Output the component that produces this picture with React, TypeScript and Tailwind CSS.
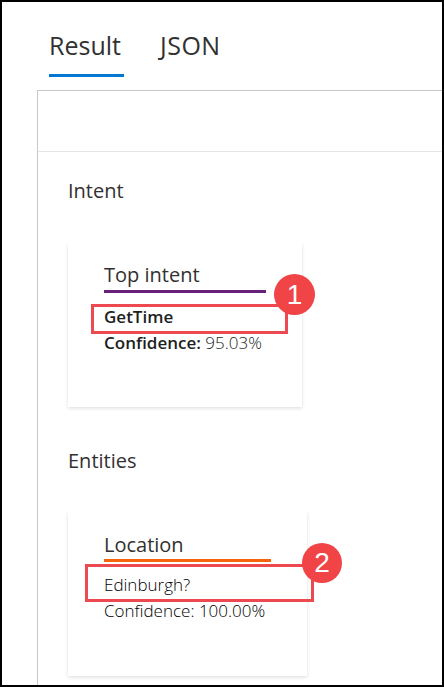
import React from "react";

function Badge({ n, className }: { n: string; className: string }) {
  return (
    <div
      className={`absolute flex items-center justify-center rounded-full bg-[#f04446] text-white font-['Liberation_Sans',sans-serif] text-[28px] leading-none ${className}`}
    >
      {n}
    </div>
  );
}

export default function App() {
  return (
    <div className="flex h-[687px] w-[444px] flex-col overflow-hidden border-2 border-black bg-white font-['Open_Sans',sans-serif] text-[#323130]">
      {/* Tabs */}
      <div className="flex pl-[47px] pt-[31px]">
        <div className="flex w-[75px] flex-col">
          <span className="text-[25px] leading-[25px]">Result</span>
          <div className="mt-[16px] h-[3px] bg-[#0078d4]" />
        </div>
        <div className="ml-[36px]">
          <span className="text-[25px] leading-[25px] tracking-[0.5px]">JSON</span>
        </div>
      </div>

      {/* Panel */}
      <div className="ml-[35px] mt-[13px] flex-1 border-l border-t border-[#c8c8c8]">
        <div className="h-[61px] border-b border-[#e5e5e5]" />
        <div className="pl-[30px]">
          <div className="mt-[29px] text-[20px] leading-[20px]">Intent</div>

          <div className="mt-[41px] h-[165px] w-[234px] bg-white px-[36px] pt-[21px] shadow-[0_1.6px_3.6px_rgba(0,0,0,0.13),0_0.3px_0.9px_rgba(0,0,0,0.11)]">
            <div className="text-[20px] leading-[24px]">Top intent</div>
            <div className="mt-[3px] h-[3px] bg-[#68217a]" />
            <div className="relative mt-[11px]">
              <div className="text-[17px] font-semibold leading-[26px] text-[#201f1e]">GetTime</div>
              <div className="absolute -left-[13px] -right-[22px] top-0 -bottom-[4px] border-[3px] border-[#ec4a50]" />
              <Badge n="1" className="left-[170px] -top-[30px] h-[41px] w-[41px]" />
            </div>
            <div className="text-[17px] leading-[26px] text-[#201f1e]">
              <span className="font-semibold">Confidence:</span> <span className="font-light">95.03%</span>
            </div>
          </div>

          <div className="mt-[44px] text-[20px] leading-[20px]">Entities</div>

          <div className="mt-[40px] h-[165px] w-[239px] bg-white px-[36px] pt-[22px] shadow-[0_1.6px_3.6px_rgba(0,0,0,0.13),0_0.3px_0.9px_rgba(0,0,0,0.11)]">
            <div className="text-[20px] font-medium leading-[24px]">Location</div>
            <div className="mt-[2px] h-[3px] bg-[#f7630c]" />
            <div className="relative mt-[10px]">
              <div className="text-[17px] font-light leading-[26px] text-[#000]">Edinburgh?</div>
              <div className="absolute -left-[19px] -right-[43px] -top-[8px] -bottom-[4px] border-[3px] border-[#ec4a50]" />
              <Badge n="2" className="left-[198px] -top-[29px] h-[40px] w-[40px]" />
            </div>
            <div className="text-[17px] font-light leading-[26px] text-[#000]">Confidence: 100.00%</div>
          </div>
        </div>
      </div>
    </div>
  );
}
